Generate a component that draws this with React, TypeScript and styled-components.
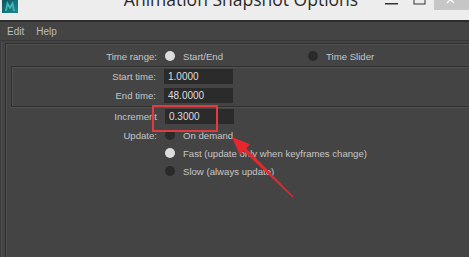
import React from "react";
import styled, { createGlobalStyle } from "styled-components";

const Global = createGlobalStyle`
  html, body { margin: 0; padding: 0; background: #444444; overflow: hidden; }
  body { font-family: "Liberation Sans", Arial, sans-serif; }
  #root { width: 469px; height: 257px; position: relative; overflow: hidden; }
`;

const Window = styled.div`
  width: 469px;
  height: 257px;
  display: flex;
  flex-direction: column;
  background: #444444;
`;

const TitleBar = styled.div`
  height: 20px;
  flex: none;
  background: #ededed;
  border-bottom: 2px solid #2c2c2c;
  display: flex;
  align-items: flex-start;
  position: relative;
  overflow: hidden;
`;

const Logo = styled.svg`
  flex: none;
  margin-left: 2px;
`;

const Title = styled.div`
  flex: 1;
  text-align: center;
  padding-left: 86px;
  margin-top: -13px;
  font-family: "Open Sans", "Noto Sans", sans-serif;
  font-size: 17.5px;
  line-height: 24px;
  color: #2a2a2a;
  white-space: nowrap;
`;

const Controls = styled.div`
  flex: none;
  display: flex;
  align-items: flex-start;
  height: 10px;
`;

const CtrlBtn = styled.div<{ $w: number; $bg?: string }>`
  width: ${(p) => p.$w}px;
  height: 10px;
  background: ${(p) => p.$bg ?? "transparent"};
  display: flex;
  justify-content: center;
  align-items: flex-start;
`;

const MenuBar = styled.div`
  height: 18px;
  flex: none;
  display: flex;
  align-items: center;
  gap: 12px;
  padding-left: 7px;
  border-bottom: 1px solid #373737;
  font-size: 10px;
  color: #bdbdbd;
`;

const MenuItem = styled.span``;

const Content = styled.div`
  flex: 1;
  padding: 2px 0 0 5px;
  box-shadow: inset 1px 0 0 #3a3a3a, inset 2px 0 0 #505050;
`;

const Frame = styled.div`
  height: 100%;
  border-top: 1px solid #2f2f2f;
  border-left: 1px solid #2f2f2f;
  box-shadow: inset 1px 1px 0 #515151;
  padding-top: 2px;
  box-sizing: border-box;
  display: flex;
  flex-direction: column;
`;

const Group = styled.div`
  margin-left: 5px;
  border-top: 1px solid #2f2f2f;
  border-left: 1px solid #2f2f2f;
  border-bottom: 1px solid #2f2f2f;
  box-shadow: inset 1px 1px 0 #515151, 0 1px 0 #515151;
  padding-bottom: 1px;
  display: flex;
  flex-direction: column;
`;

const Row = styled.div<{ $labelW: number; $h: number }>`
  display: grid;
  grid-template-columns: ${(p) => p.$labelW}px 1fr;
  column-gap: 8px;
  align-items: center;
  height: ${(p) => p.$h}px;
`;

const Label = styled.span`
  text-align: right;
  font-size: 9.6px;
  color: #c6c6c6;
  white-space: nowrap;
`;

const Field = styled.div`
  width: 69px;
  height: 15px;
  background: #2b2b2b;
  box-sizing: border-box;
  padding-left: 4px;
  display: flex;
  align-items: center;
  font-size: 10px;
  color: #dedede;
`;

const Options = styled.div`
  display: flex;
  align-items: center;
`;

const Option = styled.div<{ $w?: number }>`
  display: flex;
  align-items: center;
  gap: 8px;
  width: ${(p) => (p.$w ? `${p.$w}px` : "auto")};
  font-size: 9.6px;
  color: #c6c6c6;
  white-space: nowrap;
`;

const Dot = styled.span<{ $on?: boolean }>`
  width: 10px;
  height: 10px;
  border-radius: 50%;
  flex: none;
  background: ${(p) => (p.$on ? "#dcdcdc" : "#2a2a2a")};
`;

const Highlight = styled.div`
  position: absolute;
  left: 152px;
  top: 105px;
  width: 66px;
  height: 27px;
  box-sizing: border-box;
  border: 2px solid #e23a3f;
`;

const Arrow = styled.svg`
  position: absolute;
  left: 0;
  top: 0;
  pointer-events: none;
`;

export default function App() {
  const labelOuter = 151;
  const labelInner = 144;
  return (
    <>
      <Global />
      <Window>
        <TitleBar>
          <Logo width="16" height="13" viewBox="0 0 16 13">
            <defs>
              <linearGradient id="lg" x1="0" y1="0" x2="1" y2="1">
                <stop offset="0" stopColor="#0f5560" />
                <stop offset="1" stopColor="#1f8a8c" />
              </linearGradient>
            </defs>
            <rect x="0" y="0" width="16" height="13" fill="url(#lg)" />
            <path d="M3 11 L5 1 L8 6 L11 1 L13 11 L11 11 L10.3 6 L8 9.5 L5.7 6 L5 11 Z" fill="#3fb6b8" />
          </Logo>
          <Title>Animation Snapshot Options</Title>
          <Controls>
            <CtrlBtn $w={28}>
              <svg width="14" height="6" viewBox="0 0 14 6">
                <rect x="0" y="3" width="13" height="1.5" fill="#333" />
              </svg>
            </CtrlBtn>
            <CtrlBtn $w={28}>
              <svg width="14" height="6" viewBox="0 0 14 6">
                <rect x="1" y="-6" width="11" height="10" fill="none" stroke="#333" strokeWidth="1" />
              </svg>
            </CtrlBtn>
            <CtrlBtn $w={35} $bg="#c6c6c6">
              <svg width="12" height="6" viewBox="0 0 12 6">
                <path d="M1 -4 L8 3 M8 -4 L1 3" stroke="#fff" strokeWidth="1.3" />
              </svg>
            </CtrlBtn>
          </Controls>
        </TitleBar>
        <MenuBar>
          <MenuItem>Edit</MenuItem>
          <MenuItem>Help</MenuItem>
        </MenuBar>
        <Content>
          <Frame>
            <Row $labelW={labelOuter} $h={20}>
              <Label>Time range:</Label>
              <Options>
                <Option $w={143}>
                  <Dot $on />
                  Start/End
                </Option>
                <Option>
                  <Dot />
                  Time Slider
                </Option>
              </Options>
            </Row>
            <Group>
              <Row $labelW={labelInner} $h={19}>
                <Label>Start time:</Label>
                <Field>1.0000</Field>
              </Row>
              <Row $labelW={labelInner} $h={19}>
                <Label>End time:</Label>
                <Field>48.0000</Field>
              </Row>
            </Group>
            <Row $labelW={labelOuter} $h={19}>
              <Label>Increment</Label>
              <Field>0.3000</Field>
            </Row>
            <Row $labelW={labelOuter} $h={18}>
              <Label>Update:</Label>
              <Option>
                <Dot />
                On demand
              </Option>
            </Row>
            <Row $labelW={labelOuter} $h={18}>
              <span />
              <Option>
                <Dot $on />
                Fast (update only when keyframes change)
              </Option>
            </Row>
            <Row $labelW={labelOuter} $h={18}>
              <span />
              <Option>
                <Dot />
                Slow (always update)
              </Option>
            </Row>
          </Frame>
        </Content>
      </Window>
      <Highlight />
      <Arrow width="469" height="257" viewBox="0 0 469 257">
        <polygon
          points="232,137 250,144.2 246.3,148.3 293.4,196.6 292.6,197.4 243.6,151.1 239.8,155"
          fill="#e8262d"
        />
      </Arrow>
    </>
  );
}
